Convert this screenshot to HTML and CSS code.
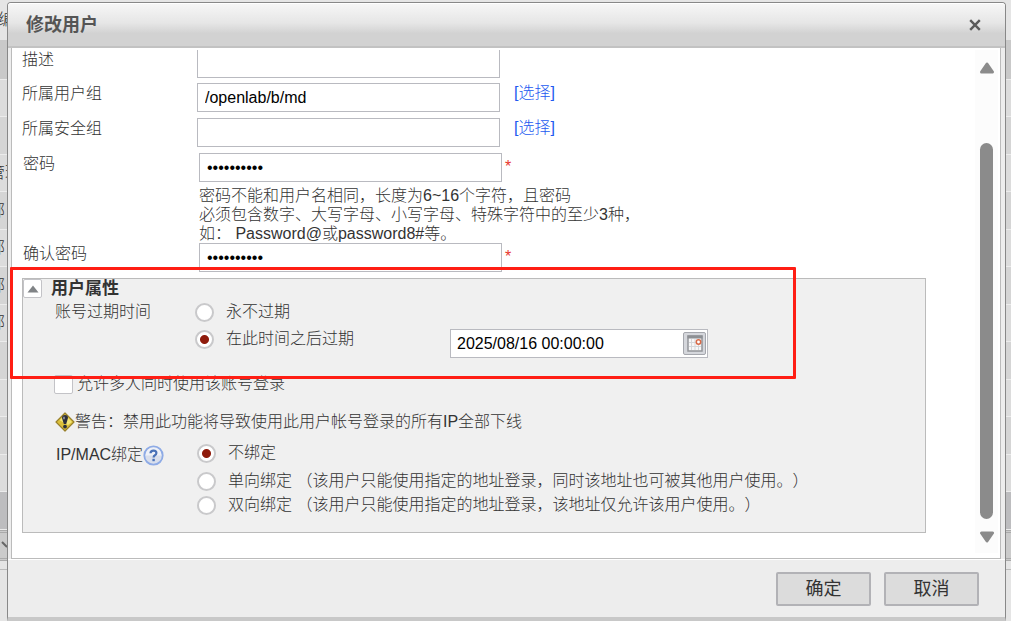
FILE: index.html
```html
<!DOCTYPE html>
<html lang="zh-CN">
<head>
<meta charset="utf-8">
<title>修改用户</title>
<link rel="stylesheet" href="styles.css">
</head>
<body>
<div class="screen">
  <div class="backdrop" aria-hidden="true">
    <div class="band band-top">编</div>
    <div class="band band-head"></div>
    <div class="band"></div>
    <div class="band alt"></div>
    <div class="band">管理</div>
    <div class="band alt">部</div>
    <div class="band">部</div>
    <div class="band alt">部</div>
    <div class="band">部</div>
    <div class="band alt"></div>
    <div class="band"></div>
    <div class="band alt"></div>
    <div class="band"></div>
    <div class="band band-selected"></div>
    <div class="band band-pager"><svg width="8" height="23" viewBox="0 0 8 23"><path d="M2 8l5 5" stroke="#666" stroke-width="2" fill="none"/></svg></div>
    <div class="band band-foot"></div>
  </div>

  <section class="dialog" role="dialog" aria-labelledby="dialog-title">
    <header class="dialog-header">
      <h1 class="dialog-title" id="dialog-title">修改用户</h1>
      <button class="close" type="button" aria-label="关闭">
        <svg width="12" height="12" viewBox="0 0 12 12"><path d="M1.2 1.2l9.6 9.6M10.8 1.2L1.2 10.8" stroke="#5a5a5a" stroke-width="2.4"/></svg>
      </button>
    </header>

    <div class="dialog-body">
      <form class="form" id="user-form">
        <div class="row">
          <label for="desc">描述</label>
          <div class="field"><input class="text" id="desc" type="text"></div>
        </div>
        <div class="row row-pick">
          <label for="group">所属用户组</label>
          <div class="field"><input class="text" id="group" type="text" value="/openlab/b/md"><a class="pick" href="#group">[选择]</a></div>
        </div>
        <div class="row row-pick">
          <label for="secgroup">所属安全组</label>
          <div class="field"><input class="text" id="secgroup" type="text"><a class="pick" href="#secgroup">[选择]</a></div>
        </div>
        <div class="row row-secret">
          <label for="pwd">密码</label>
          <div>
            <div class="field"><input class="text" id="pwd" type="password" value="Password8#"><span class="required">*</span></div>
            <p class="hint">密码不能和用户名相同，长度为6~16个字符，且密码<br>必须包含数字、大写字母、小写字母、特殊字符中的至少3种，<br>如： Password@或password8#等。</p>
          </div>
        </div>
        <div class="row row-secret">
          <label for="pwd2">确认密码</label>
          <div class="field"><input class="text" id="pwd2" type="password" value="Password8#"><span class="required">*</span></div>
        </div>

        <section class="group">
          <div class="group-head">
            <button class="toggle" type="button" aria-label="收起">
              <svg width="12" height="8" viewBox="0 0 12 8"><path d="M6 0.5L11.5 7.5H0.5Z" fill="#808386"/></svg>
            </button>
            <h2 class="group-title">用户属性</h2>
          </div>

          <div class="option-row">
            <span class="option-name">账号过期时间</span>
            <div class="options expiry">
              <label class="option"><input class="radio" type="radio" name="expire">永不过期</label>
              <div class="expire-after">
                <label class="option"><input class="radio" type="radio" name="expire" checked>在此时间之后过期</label>
                <div class="date-box">
                  <input class="date" type="text" value="2025/08/16 00:00:00" aria-label="过期时间">
                  <button class="calendar" type="button" aria-label="选择日期">
                    <svg width="16" height="17" viewBox="0 0 16 17">
                      <rect x="1" y="1" width="14" height="15" fill="#f7f7f8" stroke="#929599" stroke-width="1.5"/>
                      <rect x="0.5" y="0.5" width="15" height="3" fill="#8d9094"/>
                      <path d="M4.5 4v11M8 4v11M11.5 4v11M2 7.5h12M2 11.5h12" stroke="#d5d7da" stroke-width="1"/>
                      <circle cx="11.5" cy="7" r="2.2" fill="#fff" stroke="#d96b49" stroke-width="1.5"/>
                    </svg>
                  </button>
                </div>
              </div>
            </div>
          </div>

          <label class="multi"><input class="check" type="checkbox">允许多人同时使用该账号登录</label>

          <p class="warning">
            <svg width="20" height="20" viewBox="0 0 20 20">
              <path d="M10 1L19 10L10 19L1 10Z" fill="#dcc03a" stroke="#99802b" stroke-width="1.2" stroke-linejoin="round"/>
              <path d="M10 2.8L17 10L13 13L4.6 8.2Z" fill="#f5e779"/>
              <path d="M7 6Q7 3 10 3T13 6L11.2 12H8.8Z" fill="#2c2f3b"/>
              <circle cx="10" cy="14.6" r="1.9" fill="#2c2f3b"/>
              <path d="M9 4.8v2.4" stroke="#b9bdc8" stroke-width="1.2"/>
            </svg>警告：禁用此功能将导致使用此用户帐号登录的所有IP全部下线
          </p>

          <div class="option-row bind-row">
            <span class="option-name bind-name">IP/MAC绑定<svg class="help" width="21" height="21" viewBox="0 0 21 21">
                <circle cx="10.5" cy="10.5" r="9.2" fill="#d9dfec" stroke="#8eabe6" stroke-width="1.8"/>
                <path d="M2.5 10.5a8 8 0 0 1 16 0z" fill="#eef1f8"/>
                <path d="M7.5 8.3Q7.6 5.6 10.5 5.6T13.4 8Q13.4 9.4 12 10.2T10.6 12.4" fill="none" stroke="#4a72b8" stroke-width="2.2"/>
                <rect x="9.4" y="13.8" width="2.4" height="2.4" fill="#4a72b8"/>
              </svg></span>
            <div class="options binding">
              <label class="option option-spaced"><input class="radio" type="radio" name="bind" checked>不绑定</label>
              <label class="option"><input class="radio" type="radio" name="bind">单向绑定 （该用户只能使用指定的地址登录，同时该地址也可被其他用户使用。）</label>
              <label class="option"><input class="radio" type="radio" name="bind">双向绑定 （该用户只能使用指定的地址登录，该地址仅允许该用户使用。）</label>
            </div>
          </div>
        </section>
      </form>

      <div class="scrollbar" aria-hidden="true">
        <svg width="16" height="12" viewBox="0 0 16 12"><path d="M8 2L13.5 10H2.5Z" fill="#8b8b8b" stroke="#8b8b8b" stroke-width="3" stroke-linejoin="round"/></svg>
        <div class="thumb"></div>
        <svg width="16" height="12" viewBox="0 0 16 12"><path d="M8 10L13.5 2H2.5Z" fill="#8b8b8b" stroke="#8b8b8b" stroke-width="3" stroke-linejoin="round"/></svg>
      </div>
      <div class="highlight"></div>
    </div>

    <footer class="dialog-footer">
      <button class="button" type="submit" form="user-form">确定</button>
      <button class="button" type="button">取消</button>
    </footer>
  </section>
</div>
</body>
</html>
```
FILE: styles.css
```css
* {
  box-sizing: border-box;
}

body {
  margin: 0;
  background: #e5e5e5;
  color: #333;
  font: 300 16px/20px "Liberation Sans", "Noto Sans CJK SC", sans-serif;
  text-spacing-trim: space-all;
}

button,
input {
  margin: 0;
  font: inherit;
  color: inherit;
}

h1,
h2,
p {
  margin: 0;
}

.screen {
  position: relative;
  min-height: 100vh;
  overflow: hidden;
}

/* Page behind the dialog */
.backdrop {
  position: absolute;
  inset: 0;
}

.band {
  display: flex;
  align-items: center;
  justify-content: flex-start;
  height: 37px;
  margin-left: -11px;
  border-bottom: 1px solid #ececec;
  background: #dcdcdc;
  white-space: nowrap;
}

.band.alt {
  height: 38px;
  background: #d5d5d5;
}

.band-top {
  height: 40px;
  margin-left: -2px;
  border: 0;
  background: #e5e5e5;
}

.band-head {
  height: 40px;
  background: #c9c9c9;
}

.band-selected {
  height: 38px;
  background: #bdbdbf;
}

.band.band-pager {
  height: 31px;
  padding-left: 11px;
  border-top: 3px double #aaa;
  border-bottom: 3px double #aaa;
  background: #cbcbcb;
}

.band-foot {
  height: 9px;
  background: #e5e5e5;
  border-bottom-color: #bbb;
}

/* Dialog */
.dialog {
  position: relative;
  display: flex;
  flex-direction: column;
  min-height: calc(100vh - 2px);
  margin: 2px 5px 0 7px;
  border: 1px solid #888;
  border-bottom: 4px solid #c8c8c8;
  border-radius: 4px 4px 0 0;
  background: #ededed;
}

.dialog-header {
  display: flex;
  align-items: center;
  justify-content: space-between;
  height: 45px;
  padding: 0 24px 0 18px;
  border-top: 1px solid #fff;
  border-bottom: 2px solid #c2c2c2;
  border-radius: 3px 3px 0 0;
  background: linear-gradient(#f6f6f6, #e6e6e6 45%, #d2d2d2 70%, #d2d2d2);
}

.dialog-title {
  font-size: 18px;
  font-weight: 700;
  line-height: 24px;
  color: #555;
}

.close {
  display: flex;
  padding: 0;
  border: 0;
  background: none;
}

.dialog-body {
  position: relative;
  display: flex;
  flex: 1;
  margin: 0 4px 0 3px;
  padding-top: 2px;
  border: solid #bbb;
  border-width: 0 1px 1px;
  background: #fff;
}

.form {
  flex: 1;
  min-width: 0;
  padding: 0 49px 24px 10px;
  overflow: hidden;
}

.row {
  display: grid;
  grid-template-columns: 175px 1fr;
  min-height: 34px;
}

.row:first-child {
  margin-top: -1px;
}

.row-pick {
  min-height: 35px;
}

.row-secret {
  grid-template-columns: 176px 1fr;
  min-height: 29px;
  padding-left: 1px;
}

.row > label {
  align-self: start;
  padding-top: 1px;
}

.field {
  display: flex;
}

.text {
  width: 303px;
  height: 29px;
  padding: 0 7px;
  border: 1px solid #b9bac0;
  border-radius: 0;
  outline: 0;
  background: #fff;
  color: #000;
}

.pick {
  margin-left: 14px;
  color: #2259f0;
  text-decoration: none;
}

.required {
  margin: 4px 0 0 3px;
  color: #e8382c;
  font-size: 16px;
}

.hint {
  margin-top: 4px;
  line-height: 19px;
}

/* User attributes */
.group {
  margin-top: 6px;
  padding-bottom: 17px;
  border: 1px solid #bbb;
  background: #f0f0f0;
}

.group-head {
  display: flex;
  gap: 9px;
}

.toggle {
  display: flex;
  align-items: center;
  justify-content: center;
  width: 19px;
  height: 19px;
  padding: 0;
  border: 1px solid #c3c3c7;
  border-radius: 2px;
  background: #fff;
}

.group-title {
  font-size: 17px;
  font-weight: 700;
  line-height: 20px;
}

.option-row {
  display: grid;
  grid-template-columns: 172px 1fr;
  padding-top: 3px;
}

.option-name {
  padding-left: 32px;
}

.options {
  display: flex;
  flex-direction: column;
}

.option {
  display: flex;
  align-items: center;
  gap: 12px;
}

.expiry {
  gap: 7px;
}

.radio {
  flex: none;
  width: 19px;
  height: 19px;
  border: 2px solid #c9c9cb;
  border-radius: 50%;
  appearance: none;
  background: #fff;
}

.radio:checked {
  background: radial-gradient(circle, #8f1b0c 4px, #fff 5px);
}

.expire-after {
  display: flex;
  align-items: flex-start;
  gap: 96px;
}

.expire-after .option {
  height: 20px;
}

.date-box {
  display: flex;
  width: 258px;
  height: 29px;
  border: 1px solid #b9bac0;
  background: #fff;
}

.date {
  flex: 1;
  min-width: 0;
  padding: 0 6px;
  border: 0;
  outline: 0;
  background: none;
  color: #000;
}

.calendar {
  display: flex;
  align-items: center;
  justify-content: center;
  width: 23px;
  height: 23px;
  margin: 2px 1px 0 0;
  padding: 0;
  border: 1px solid #a5a7ad;
  border-radius: 2px;
  background: #d5d7dc;
}

.multi {
  display: flex;
  align-items: center;
  gap: 4px;
  margin-top: 16px;
  padding-left: 31px;
}

.check {
  width: 19px;
  height: 19px;
  border: 1px solid #c3c3c7;
  border-radius: 2px;
  appearance: none;
  background: #fff;
}

.warning {
  display: flex;
  align-items: center;
  margin-top: 18px;
  padding-left: 32px;
}

.bind-row {
  grid-template-columns: 174px 1fr;
  padding-top: 11px;
}

.bind-name {
  display: flex;
  padding: 2px 0 0 33px;
}

.binding {
  gap: 4px;
}

.option-spaced {
  margin-bottom: 4px;
}

.highlight {
  position: absolute;
  top: 219px;
  left: -2px;
  width: 786px;
  height: 112px;
  border: 3px solid #ff1e14;
  border-radius: 1px;
  pointer-events: none;
}

.scrollbar {
  display: flex;
  flex-direction: column;
  align-items: center;
  gap: 12px;
  width: 23px;
  margin: 0 2px 5px 0;
  padding: 12px 0 10px;
  background: #fcfcfc;
}

.thumb {
  flex: 1;
  width: 13px;
  margin-top: 57px;
  border-radius: 7px;
  background: #8b8b8b;
}

.dialog-footer {
  display: flex;
  justify-content: flex-end;
  gap: 13px;
  padding: 12px 26px 11px;
  border-top: 1px solid #fff;
}

.button {
  width: 95px;
  height: 34px;
  padding: 0;
  border: 2px solid #b2b2b6;
  border-radius: 2px;
  background: #dcdcdc;
  font-size: 18px;
  font-weight: 400;
}
```
